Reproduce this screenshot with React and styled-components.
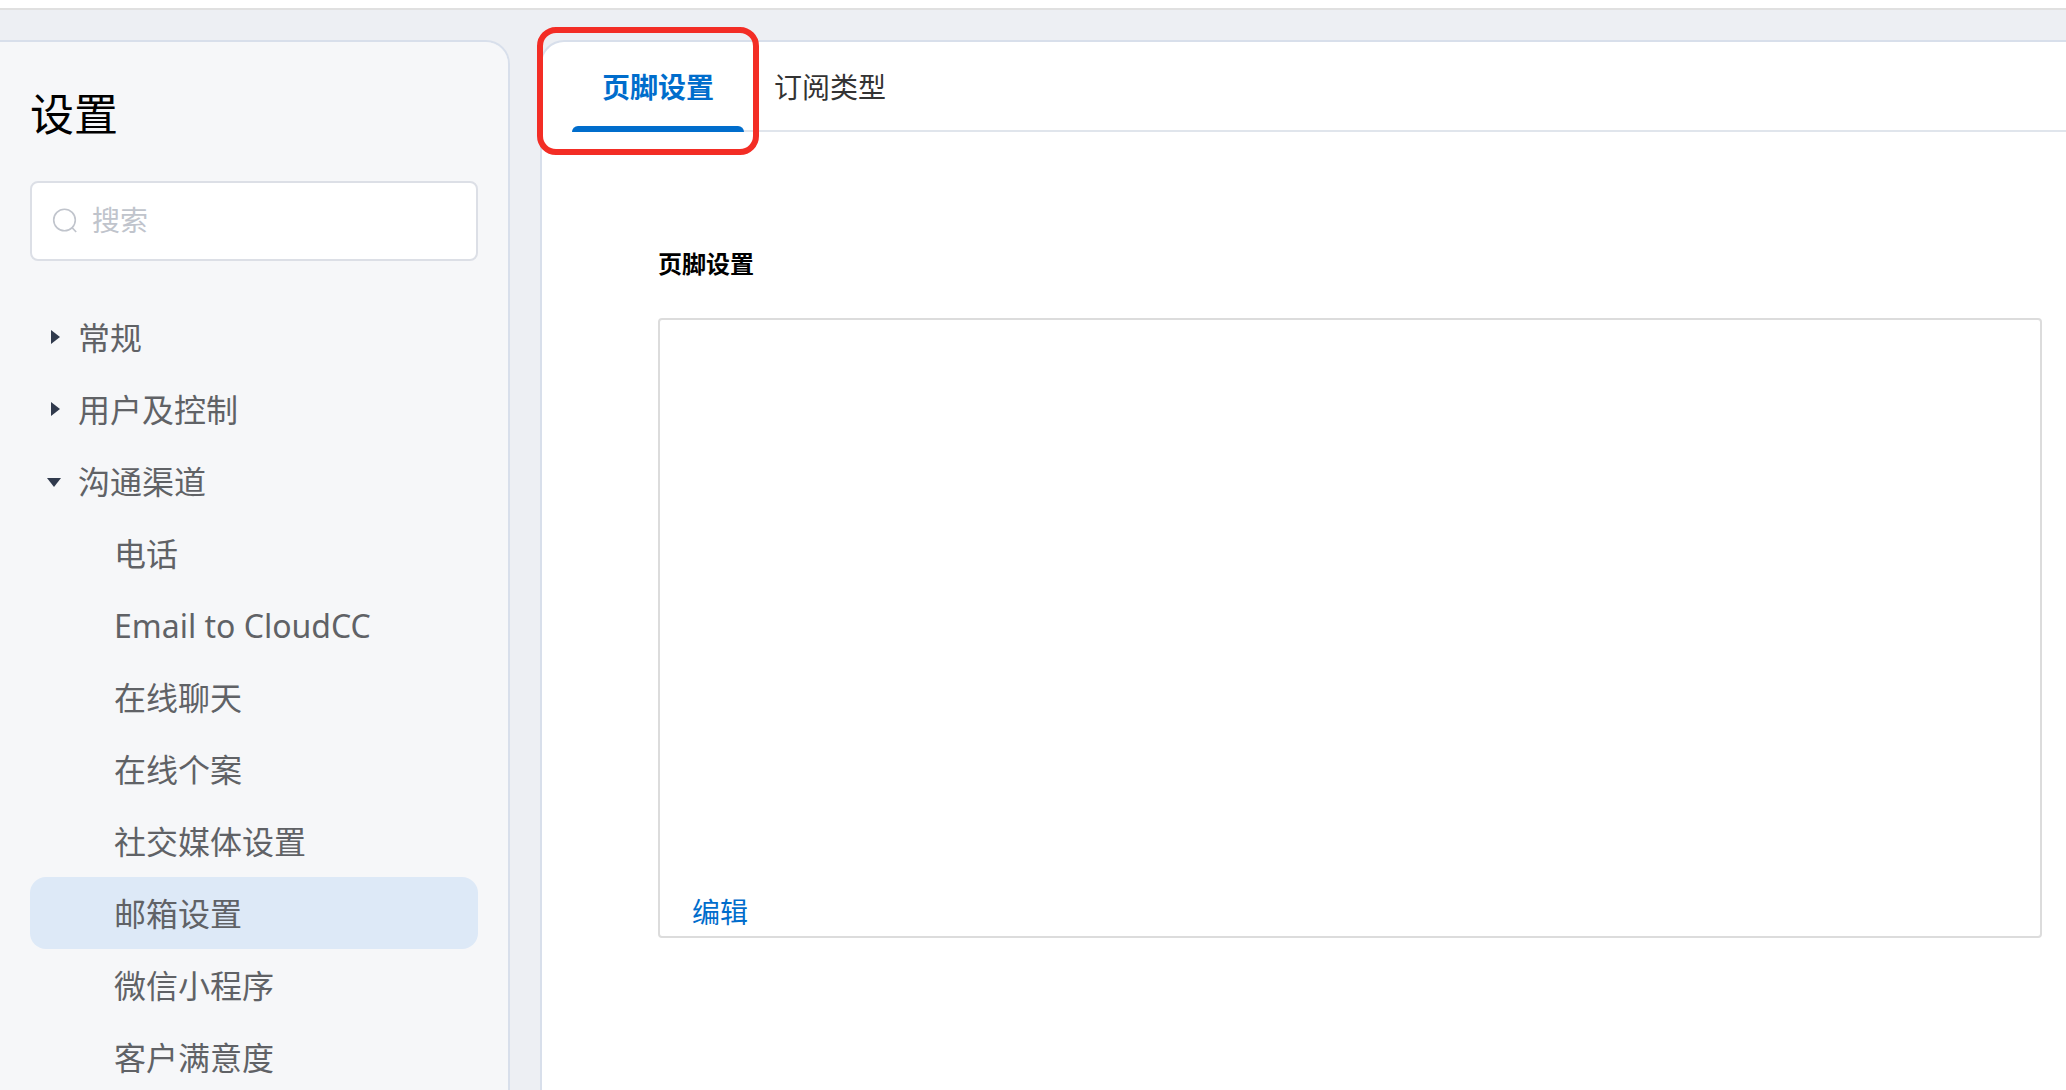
import { useState } from 'react';
import styled, { createGlobalStyle } from 'styled-components';

const GlobalStyle = createGlobalStyle`
  * {
    box-sizing: border-box;
  }

  body {
    margin: 0;
    background-color: #edeff3;
    font-family: "Noto Sans", "Noto Sans CJK SC", sans-serif;
  }

  button, input {
    font-family: inherit;
  }
`;

const PageWrapper = styled.div`
  display: flex;
  flex-direction: column;
  height: 100vh;
`;

const TopBar = styled.header`
  flex: none;
  height: 10px;
  background-color: #fff;
  border-bottom: 2px solid #e0e0e0;
`;

const Body = styled.div`
  display: flex;
  flex: 1;
  gap: 30px;
  min-height: 0;
  padding-top: 30px;
`;

const SideBar = styled.aside`
  flex: none;
  width: 510px;
  padding: 34px 30px 0;
  background-color: #f6f7f9;
  border: 2px solid #d8dfeb;
  border-width: 2px 2px 0 0;
  border-top-right-radius: 24px;
  overflow-y: auto;
  scrollbar-width: none;
`;

const SideTitle = styled.h1`
  margin: 0 0 29px;
  font-size: 44px;
  font-weight: 400;
  line-height: 76px;
  color: #000;
`;

const SearchBox = styled.label`
  display: flex;
  align-items: center;
  gap: 14px;
  height: 80px;
  padding: 0 20px;
  background-color: #fff;
  border: 2px solid #dcdfe6;
  border-radius: 8px;
`;

const SearchInput = styled.input`
  flex: 1;
  min-width: 0;
  padding: 0 0 2px;
  border: none;
  outline: none;
  background: none;
  font-size: 28px;
  color: #606266;

  &::placeholder {
    color: #c0c4cc;
    opacity: 1;
  }
`;

const MenuList = styled.ul`
  margin: 0;
  padding: 0;
  list-style: none;
`;

const Menu = styled(MenuList)`
  margin-top: 40px;
`;

const GroupButton = styled.button`
  display: flex;
  align-items: center;
  width: 100%;
  height: 72px;
  padding: 2px 0 0 16px;
  border: none;
  background: none;
  font-size: 32px;
  line-height: 70px;
  color: #606266;
  cursor: pointer;
`;

const Caret = styled.svg`
  flex: none;
  width: 16px;
  height: 16px;
  margin-right: 16px;
  fill: #303a4d;
`;

const MenuLink = styled.a`
  display: block;
  height: 72px;
  padding: 2px 0 0 84px;
  border-radius: 16px;
  background-color: ${(props) => (props.$active ? '#dde9f7' : 'transparent')};
  font-size: 32px;
  line-height: 70px;
  color: #606266;
  text-decoration: none;
`;

const Panel = styled.main`
  flex: 1;
  min-width: 0;
  background-color: #fff;
  border: 2px solid #d8dfeb;
  border-width: 2px 0 0 2px;
  border-top-left-radius: 24px;
`;

const Tabs = styled.div`
  display: flex;
  height: 90px;
  margin-left: 30px;
  border-bottom: 2px solid #e0e5ec;
`;

const Tab = styled.button`
  position: relative;
  height: 90px;
  padding: 0 30px;
  border: none;
  background: none;
  font-size: 28px;
  font-weight: ${(props) => (props.$active ? 700 : 400)};
  line-height: 90px;
  color: ${(props) => (props.$active ? '#006dcc' : '#333')};
  cursor: pointer;
`;

const TabLine = styled.span`
  position: absolute;
  left: 0;
  right: 0;
  bottom: 0;
  height: 6px;
  background-color: #006dcc;
  border-radius: 6px 6px 0 0;
`;

const Marker = styled.span`
  position: absolute;
  top: -15px;
  left: -35px;
  right: -15px;
  bottom: -23px;
  border: 6px solid #f32d25;
  border-radius: 19px;
  pointer-events: none;
`;

const Content = styled.section`
  padding: 112px 24px 0 116px;
`;

const SectionTitle = styled.h2`
  margin: 0 0 34px;
  font-size: 24px;
  font-weight: 700;
  line-height: 40px;
  color: #000;
`;

const FooterBox = styled.div`
  display: flex;
  align-items: flex-end;
  min-height: 620px;
  padding: 0 32px 4px;
  border: 2px solid #dcdcdc;
  border-radius: 4px;
`;

const EditLink = styled.a`
  font-size: 28px;
  line-height: 40px;
  color: #006dcc;
  text-decoration: none;
`;

const channels = [
  '电话',
  'Email to CloudCC',
  '在线聊天',
  '在线个案',
  '社交媒体设置',
  '邮箱设置',
  '微信小程序',
  '客户满意度',
];

const groups = [
  { name: '常规', items: [] },
  { name: '用户及控制', items: [] },
  { name: '沟通渠道', items: channels },
];

const tabs = ['页脚设置', '订阅类型'];

const SearchIcon = () => (
  <svg width="26" height="26" viewBox="0 0 26 26" fill="none" stroke="#c0c4cc" strokeWidth="1.6" aria-hidden="true">
    <circle cx="12.5" cy="12" r="10.8" />
    <path d="M19.8 19.4 L24.2 24" />
  </svg>
);

const MenuGroup = ({ group, current, onSelect }) => {
  const [open, setOpen] = useState(group.items.length > 0);

  return (
    <li>
      <GroupButton type="button" aria-expanded={open} onClick={() => setOpen(!open)}>
        <Caret viewBox="0 0 16 16" aria-hidden="true">
          {open ? <path d="M1 4h14l-7 9z" /> : <path d="M5 0v14l9-7z" />}
        </Caret>
        {group.name}
      </GroupButton>
      {open && (
        <MenuList>
          {group.items.map((item) => (
            <li key={item}>
              <MenuLink href="#" $active={item === current} onClick={() => onSelect(item)}>
                {item}
              </MenuLink>
            </li>
          ))}
        </MenuList>
      )}
    </li>
  );
};

const App = () => {
  const [current, setCurrent] = useState('邮箱设置');
  const [tab, setTab] = useState(tabs[0]);

  return (
    <PageWrapper>
      <GlobalStyle />
      <TopBar />
      <Body>
        <SideBar>
          <SideTitle>设置</SideTitle>
          <SearchBox>
            <SearchIcon />
            <SearchInput type="text" placeholder="搜索" aria-label="搜索" />
          </SearchBox>
          <Menu>
            {groups.map((group) => (
              <MenuGroup key={group.name} group={group} current={current} onSelect={setCurrent} />
            ))}
          </Menu>
        </SideBar>
        <Panel>
          <Tabs role="tablist">
            {tabs.map((name) => (
              <Tab
                key={name}
                type="button"
                role="tab"
                aria-selected={name === tab}
                $active={name === tab}
                onClick={() => setTab(name)}
              >
                {name}
                {name === tab && <TabLine />}
                {name === tabs[0] && <Marker />}
              </Tab>
            ))}
          </Tabs>
          <Content>
            <SectionTitle>{tab}</SectionTitle>
            <FooterBox>
              <EditLink href="#">编辑</EditLink>
            </FooterBox>
          </Content>
        </Panel>
      </Body>
    </PageWrapper>
  );
};

export default App;
